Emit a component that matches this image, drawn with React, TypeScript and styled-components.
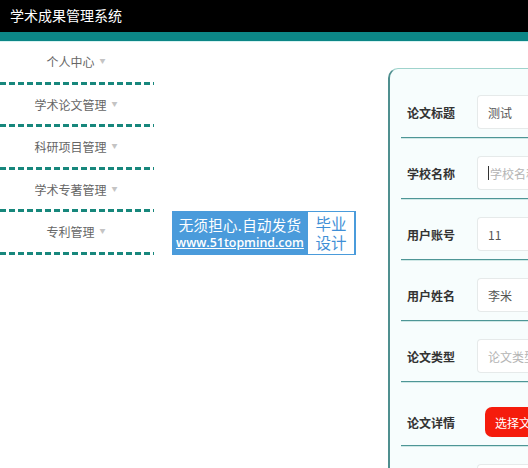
import styled, { createGlobalStyle } from 'styled-components';

const GlobalStyle = createGlobalStyle`
  html, body {
    margin: 0;
    padding: 0;
    background: #ffffff;
    font-family: "Noto Sans CJK SC", "Noto Sans", sans-serif;
    overflow: hidden;
  }
`;

const Page = styled.div`
  width: 528px;
  height: 468px;
  position: relative;
  overflow: hidden;
`;

const Header = styled.div`
  height: 32px;
  background: #000000;
  color: #ffffff;
  font-size: 14px;
  line-height: 31px;
  padding-left: 10px;
`;

const TealBar = styled.div`
  height: 9px;
  background: #0c8686;
  border-bottom: 1px solid #d8f3f2;
`;

const Body = styled.div`
  display: flex;
  align-items: flex-start;
`;

const Nav = styled.ul`
  list-style: none;
  margin: 0;
  padding: 0;
  width: 154px;
  flex-shrink: 0;
`;

const NavItem = styled.li`
  position: relative;
  height: 39.5px;
  margin-bottom: 3px;
  display: flex;
  align-items: center;
  justify-content: center;
  font-size: 12px;
  color: #666666;
  padding-right: 2px;

  &::after {
    content: '';
    position: absolute;
    left: 0;
    right: 0;
    bottom: -3px;
    height: 3px;
    background: repeating-linear-gradient(
      to right,
      #17877c 0 6px,
      transparent 6px 9px
    );
  }
`;

const Caret = styled.span`
  font-size: 6px;
  color: #c4c4c4;
  margin-left: 5px;
  margin-top: -2px;
`;

const Main = styled.div`
  flex: 1;
  padding: 26px 0 0 234px;
`;

const Card = styled.div`
  width: 200px;
  background: #f7fdfd;
  border: 1px solid #9fd3cc;
  border-left: 2px solid #4f8f8f;
  border-right: none;
  border-radius: 10px 0 0 10px;
  padding: 8px 0 0 11px;
`;

const Row = styled.div<{ $tall?: boolean }>`
  display: flex;
  align-items: center;
  height: ${(p) => (p.$tall ? 64 : 61)}px;
  padding-top: ${(p) => (p.$tall ? 17 : 10)}px;
  box-sizing: border-box;
  border-bottom: 1px solid #4e9696;
  box-shadow: 0 1px 0 #cfe8e6;
`;

const Label = styled.div`
  width: 70px;
  padding-left: 6px;
  flex-shrink: 0;
  font-size: 12px;
  font-weight: 700;
  color: #333333;
`;

const Input = styled.div<{ $placeholder?: boolean }>`
  flex: 1;
  height: 34px;
  box-sizing: border-box;
  background: #ffffff;
  border: 1px solid #e6eaea;
  border-right: none;
  border-radius: 4px 0 0 4px;
  padding-left: 10px;
  display: flex;
  align-items: center;
  font-size: 12px;
  color: ${(p) => (p.$placeholder ? '#b4b4b4' : '#555555')};
  white-space: nowrap;
  overflow: hidden;
`;

const Cursor = styled.span`
  display: inline-block;
  width: 1px;
  height: 14px;
  background: #333333;
  margin-right: 1px;
`;

const UploadButton = styled.div`
  margin-left: 8px;
  height: 30px;
  padding: 0 10px;
  background: #f51c0c;
  color: #ffffff;
  font-size: 12px;
  border-radius: 7px 0 0 7px;
  display: flex;
  align-items: center;
  white-space: nowrap;
  overflow: hidden;
`;

const Banner = styled.div`
  position: absolute;
  left: 172px;
  top: 211px;
  width: 184px;
  height: 44px;
  background: #4a9bdb;
  display: flex;
  align-items: stretch;
  padding: 1px 2px 1px 0;
  box-sizing: border-box;
`;

const BannerText = styled.div`
  flex: 1;
  display: flex;
  flex-direction: column;
  align-items: center;
  justify-content: center;
  color: #ffffff;
  padding-top: 1px;
`;

const BannerTitle = styled.div`
  font-size: 14.5px;
  line-height: 19px;
  letter-spacing: 0.3px;
`;

const BannerUrl = styled.div`
  font-family: "Open Sans", "Noto Sans", sans-serif;
  font-size: 12.4px;
  font-weight: 600;
  line-height: 18px;
  text-decoration: underline;
`;

const BannerBadge = styled.div`
  width: 46px;
  background: #ffffff;
  color: #3f8fd6;
  font-size: 15.5px;
  display: flex;
  flex-direction: column;
  align-items: center;
  justify-content: center;
`;

const BadgeLine = styled.div`
  line-height: 19px;
`;

const navItems = ['个人中心', '学术论文管理', '科研项目管理', '学术专著管理', '专利管理'];

export default function App() {
  return (
    <Page>
      <GlobalStyle />
      <Header>学术成果管理系统</Header>
      <TealBar />
      <Body>
        <Nav>
          {navItems.map((item) => (
            <NavItem key={item}>
              {item}
              <Caret>▼</Caret>
            </NavItem>
          ))}
        </Nav>
        <Main>
          <Card>
            <Row>
              <Label>论文标题</Label>
              <Input>测试</Input>
            </Row>
            <Row>
              <Label>学校名称</Label>
              <Input $placeholder>
                <Cursor />
                学校名称
              </Input>
            </Row>
            <Row>
              <Label>用户账号</Label>
              <Input>11</Input>
            </Row>
            <Row>
              <Label>用户姓名</Label>
              <Input>李米</Input>
            </Row>
            <Row>
              <Label>论文类型</Label>
              <Input $placeholder>论文类型</Input>
            </Row>
            <Row $tall>
              <Label>论文详情</Label>
              <UploadButton>选择文件</UploadButton>
            </Row>
            <Row>
              <Label />
              <Input />
            </Row>
          </Card>
        </Main>
      </Body>
      <Banner>
        <BannerText>
          <BannerTitle>无须担心.自动发货</BannerTitle>
          <BannerUrl>www.51topmind.com</BannerUrl>
        </BannerText>
        <BannerBadge>
          <BadgeLine>毕业</BadgeLine>
          <BadgeLine>设计</BadgeLine>
        </BannerBadge>
      </Banner>
    </Page>
  );
}
